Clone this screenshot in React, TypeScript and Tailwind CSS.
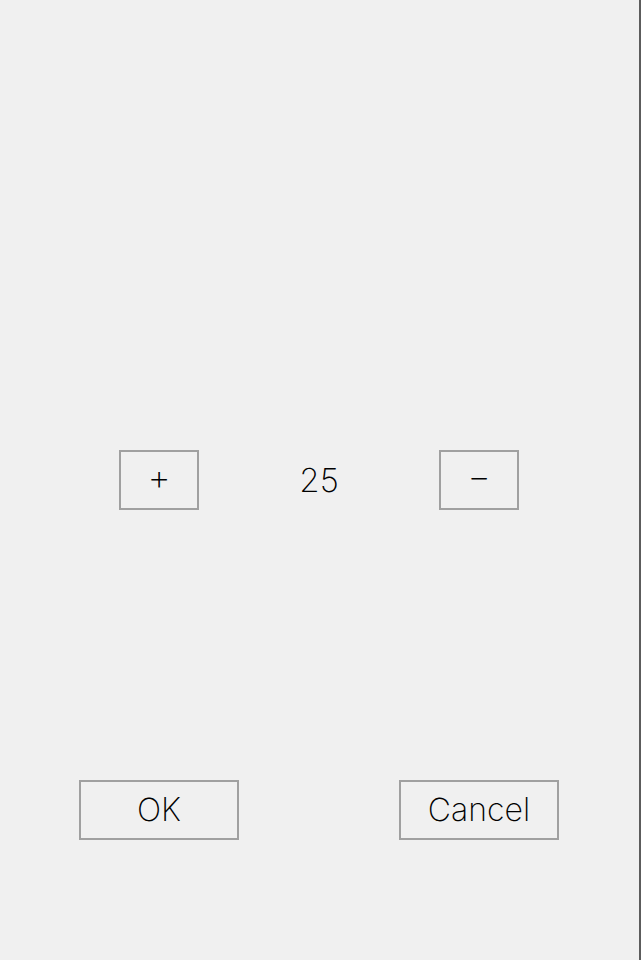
export default function App() {
  return (
    <div
      className="h-[960px] w-full bg-[#f0f0f0] border-r-2 border-[#5c5c5c] text-black"
      style={{ fontFamily: 'Inter, "Noto Sans", sans-serif' }}
    >
      <div className="flex flex-col pl-[79px] pt-[450px]">
        <div className="flex items-center">
          <div className="w-[160px] flex justify-center">
            <button
              type="button"
              className="w-[80px] h-[60px] border-2 border-[#a0a0a0] flex items-center justify-center text-[36px] font-extralight leading-none pb-[7px]"
            >
              +
            </button>
          </div>
          <div className="w-[160px] flex justify-center text-[33px] font-extralight leading-none">25</div>
          <div className="w-[160px] flex justify-center">
            <button
              type="button"
              className="w-[80px] h-[60px] border-2 border-[#a0a0a0] flex items-center justify-center text-[36px] font-extralight leading-none pb-[9px]"
            >
              −
            </button>
          </div>
        </div>

        <div className="mt-[270px] flex items-center gap-[160px]">
          <button
            type="button"
            className="w-[160px] h-[60px] border-2 border-[#a0a0a0] flex items-center justify-center text-[32px] font-extralight leading-none"
          >
            OK
          </button>
          <button
            type="button"
            className="w-[160px] h-[60px] border-2 border-[#a0a0a0] flex items-center justify-center text-[32px] font-extralight leading-none"
          >
            Cancel
          </button>
        </div>
      </div>
    </div>
  )
}
